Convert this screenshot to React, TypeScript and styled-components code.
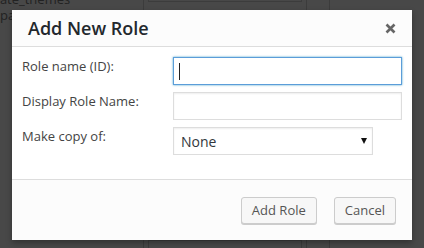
import styled, { createGlobalStyle } from 'styled-components'

const Global = createGlobalStyle`
  html, body {
    margin: 0;
    width: 424px;
    height: 248px;
    overflow: hidden;
    font-family: "Open Sans", "Liberation Sans", sans-serif;
  }
`

const Screen = styled.div`
  position: relative;
  width: 424px;
  height: 248px;
  overflow: hidden;
  background: #484848;
`

// dimmed page behind the modal
const Page = styled.div`
  display: flex;
  height: 100%;
`

const CapsColumn = styled.div`
  width: 143px;
  margin-top: -9px;
  font-size: 13px;
  line-height: 16px;
  color: #222;
  white-space: nowrap;
  overflow: hidden;
`

const CapsLine = styled.div<{ $shift?: number }>`
  margin-left: ${(p) => p.$shift ?? 0}px;
`

const SidePanel = styled.div`
  width: 154px;
  padding: 0 4px 0 4px;
  border-left: 1px solid #3c3c3c;
  border-right: 1px solid #3c3c3c;
`

const TopBox = styled.div`
  height: 1px;
  border: 1px solid #3c3c3c;
  border-top: none;
`

const ResetBox = styled.div`
  margin-top: 238px;
  height: 30px;
  border: 1px solid #3c3c3c;
  text-align: center;
  font-size: 13px;
  line-height: 24px;
  color: #5e1111;
`

const Gutter = styled.div`
  width: 22px;
  border-right: 1px solid #3c3c3c;
`

const Dialog = styled.div`
  position: absolute;
  left: 12px;
  top: 10px;
  width: 400px;
  height: 230px;
  display: flex;
  flex-direction: column;
  background: #fff;
  box-shadow: 0 3px 6px rgba(0, 0, 0, 0.3);
`

const Header = styled.div`
  height: 36px;
  flex-shrink: 0;
  display: flex;
  align-items: center;
  justify-content: space-between;
  padding: 0 14px 0 16px;
  background: #fcfcfc;
  border-bottom: 1px solid #ddd;
`

const Title = styled.h1`
  margin: 0;
  font-size: 18px;
  font-weight: 600;
  color: #23282d;
  line-height: 36px;
`

const CloseButton = styled.button`
  display: flex;
  align-items: center;
  justify-content: center;
  width: 16px;
  height: 16px;
  padding: 0;
  border: none;
  background: none;
  color: #666;
`

const Body = styled.div`
  flex: 1;
  padding: 10px 10px 0 10px;
  display: grid;
  grid-template-columns: 151px 1fr;
  grid-auto-rows: 28px;
  row-gap: 7px;
  align-content: start;
`

const Label = styled.label`
  font-size: 13px;
  line-height: 18px;
  color: #444;
`

const Field = styled.div`
  position: relative;
`

const TextInput = styled.input<{ $focused?: boolean }>`
  box-sizing: border-box;
  width: 229px;
  height: 28px;
  padding: 0 5px;
  font-family: inherit;
  font-size: 14px;
  color: #32373c;
  background: #fff;
  outline: none;
  border: 1px solid ${(p) => (p.$focused ? '#5b9dd9' : '#ddd')};
  box-shadow: ${(p) =>
    p.$focused ? '0 0 2px rgba(30, 140, 190, 0.8)' : 'inset 0 1px 2px rgba(0, 0, 0, 0.07)'};
`

const Caret = styled.span`
  position: absolute;
  left: 6px;
  top: 6px;
  width: 1px;
  height: 17px;
  background: #222;
`

const SelectWrap = styled.div`
  position: relative;
  width: 200px;
  &::after {
    content: '';
    position: absolute;
    right: 6px;
    top: 11px;
    border-left: 3px solid transparent;
    border-right: 3px solid transparent;
    border-top: 6px solid #111;
  }
`

const Select = styled.select`
  appearance: none;
  box-sizing: border-box;
  width: 200px;
  height: 28px;
  padding: 0 7px;
  font-family: inherit;
  font-size: 14px;
  color: #32373c;
  background: #fff;
  border: 1px solid #ddd;
  border-radius: 0;
  box-shadow: inset 0 1px 2px rgba(0, 0, 0, 0.07);
  outline: none;
`

const Footer = styled.div`
  height: 60px;
  flex-shrink: 0;
  display: flex;
  align-items: center;
  justify-content: flex-end;
  gap: 17px;
  padding: 0 16px;
  background: #fcfcfc;
  border-top: 1px solid #ddd;
`

const Button = styled.button`
  height: 27px;
  padding: 0 10px;
  font-family: inherit;
  font-size: 13px;
  line-height: 25px;
  color: #555;
  background: #f7f7f7;
  border: 1px solid #ccc;
  border-radius: 3px;
  box-shadow: 0 1px 0 #ccc;
`

export default function App() {
  return (
    <Screen>
      <Global />
      <Page>
        <CapsColumn>
          <CapsLine $shift={-24}>update_themes</CapsLine>
          <CapsLine>package</CapsLine>
        </CapsColumn>
        <SidePanel>
          <TopBox />
          <ResetBox>Reset</ResetBox>
        </SidePanel>
        <Gutter />
      </Page>

      <Dialog>
        <Header>
          <Title>Add New Role</Title>
          <CloseButton aria-label="Close">
            <svg width="11" height="11" viewBox="0 0 11 11">
              <path d="M1.5 1.5 L9.5 9.5 M9.5 1.5 L1.5 9.5" stroke="currentColor" strokeWidth="2.6" />
            </svg>
          </CloseButton>
        </Header>
        <Body>
          <Label>Role name (ID):</Label>
          <Field>
            <TextInput $focused />
            <Caret />
          </Field>
          <Label>Display Role Name:</Label>
          <Field>
            <TextInput />
          </Field>
          <Label>Make copy of:</Label>
          <SelectWrap>
            <Select defaultValue="none">
              <option value="none">None</option>
            </Select>
          </SelectWrap>
        </Body>
        <Footer>
          <Button>Add Role</Button>
          <Button>Cancel</Button>
        </Footer>
      </Dialog>
    </Screen>
  )
}
